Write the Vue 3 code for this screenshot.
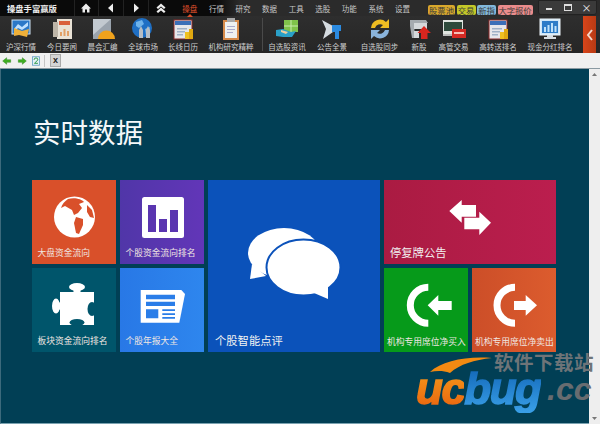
<template>
  <div class="app">
    <div class="titlebar">
      <span class="app-name">操盘手富赢版</span>
      <div class="nav-btns">
        <span class="nav-btn">
          <svg width="12" height="12" viewBox="0 0 12 12"><path d="M6 1.500 11 6.500H9.500V10.500H7V7.500H5V10.500H2.500V6.500H1Z" fill="#eee" /></svg>
        </span>
        <span class="nav-btn">
          <svg width="12" height="12" viewBox="0 0 12 12"><path d="M8 1.500V10.500L3 6Z" fill="#eee" /></svg>
        </span>
        <span class="nav-btn">
          <svg width="12" height="12" viewBox="0 0 12 12"><path d="M4 1.500V10.500L9 6Z" fill="#eee" /></svg>
        </span>
        <span class="nav-btn">
          <svg width="12" height="12" viewBox="0 0 12 12"><path d="M1.500 5.500 6 1.500 10.500 5.500 9 7 6 4.500 3 7ZM1.500 9.500 6 5.500 10.500 9.500 9 11 6 8.500 3 11Z" fill="#eee" /></svg>
        </span>
      </div>
      <div class="menu">
        <span v-for="(m, i) in menus" :key="m" class="menu-item" :class="{ active: i === 0 }">{{ m }}</span>
      </div>
      <div class="badges">
        <span class="badge yellow">股票池</span>
        <span class="badge lime">交易</span>
        <span class="badge blue">新指</span>
        <span class="badge pink">大字报价</span>
      </div>
      <div class="win-btns">
        <span class="win-btn"><i class="win-min"></i></span>
        <span class="win-btn"><i class="win-max"></i></span>
        <span class="win-btn win-close">×</span>
      </div>
    </div>

    <div class="toolbar">
      <template v-for="item in tools" :key="item.label">
        <span v-if="item.sep" class="tool-sep"></span>
        <div class="tool" :style="{ width: item.w + 'px' }">
          <svg width="26" height="24" viewBox="0 0 26 24">
            <g v-if="item.icon === 'market'">
              <rect x="4" y="3" width="18" height="14" fill="#2b78c8" stroke="#cfe3f5" />
              <path d="M6 12 10 7 14 10 20 5V9L14 13 10 11 7 14Z" fill="#bfe0ff" />
              <path d="M6 11 14 14 21 12 19 20 11 18 6 19Z" fill="#eeb03a" />
            </g>
            <g v-else-if="item.icon === 'news'">
              <rect x="8" y="2" width="15" height="20" fill="#e9e2d6" />
              <rect x="4" y="5" width="5" height="15" fill="#bdb5a8" />
              <rect x="10" y="4" width="11" height="4" fill="#d9603c" />
              <path d="M11 19V15H13V19ZM14.500 19V12H16.500V19ZM18 19V14H20V19Z" fill="#e2a066" />
            </g>
            <g v-else-if="item.icon === 'morning'">
              <rect x="3" y="2" width="18" height="20" fill="#9aa3ad" />
              <path d="M3 2H21L3 18Z" fill="#c2c9d0" />
              <path d="M8 22A8.500 8.500 0 0 1 25 22Z" fill="#f0a21c" />
            </g>
            <g v-else-if="item.icon === 'globe'">
              <circle cx="12" cy="11" r="10" fill="#1f6fc4" />
              <path d="M6 5 12 3 14 7 9 11 6 9ZM15 12 20 10 19 16 16 18Z" fill="#6fb3ea" />
              <path d="M9 21V13L11 9 13 13V21ZM16 21V13L18 9 20 13V21Z" fill="#b8bec4" />
            </g>
            <g v-else-if="item.icon === 'calendar'">
              <rect x="4" y="3" width="18" height="19" fill="#e6e6ea" stroke="#8c2b2b" />
              <rect x="5" y="4" width="16" height="4" fill="#3c6fb8" />
              <path d="M7 11H17V12.500H7ZM7 14H15V15.500H7ZM7 17H13V18.500H7Z" fill="#9fb0c6" />
              <rect x="15" y="15" width="4" height="7" fill="#f0c020" />
              <rect x="19" y="12" width="4" height="10" fill="#e0a810" />
            </g>
            <g v-else-if="item.icon === 'clip'">
              <rect x="5" y="3" width="16" height="20" fill="#d68a4a" />
              <rect x="7" y="5" width="12" height="16" fill="#eef0f0" />
              <rect x="9" y="1" width="8" height="4" fill="#a8a8a8" />
              <path d="M9 9H17V10H9ZM9 12H17V13H9ZM9 15H15V16H9Z" fill="#aac" />
            </g>
            <g v-else-if="item.icon === 'hand'">
              <rect x="10" y="3" width="14" height="12" fill="#7fc24a" />
              <path d="M17 3V15M10 9H24" stroke="#c8ecae" />
              <path d="M2 13 9 12 17 15 22 14 18 20 9 20 2 19Z" fill="#2aa0c8" />
              <path d="M7 13 14 15 12 17 7 15Z" fill="#f0d0a0" />
            </g>
            <g v-else-if="item.icon === 'horn'">
              <path d="M3 3 14 9V15L4 22 7 12Z" fill="#d5dbe0" />
              <path d="M13 8H22V14H20V22H16V15H13Z" fill="#2b8ae0" />
            </g>
            <g v-else-if="item.icon === 'sync'">
              <path d="M4 11A9 9 0 0 1 19 5L22 2V11H13L16 8A5.500 5.500 0 0 0 8 11Z" fill="#eebc22" />
              <path d="M22 13A9 9 0 0 1 7 19L4 22V13H13L10 16A5.500 5.500 0 0 0 18 13Z" fill="#8ab4dc" />
            </g>
            <g v-else-if="item.icon === 'new'">
              <path d="M4 3H20L22 6H8L9 21H6L4 9Z" fill="#a6abb0" />
              <path d="M8 6H21V12H8ZM8 14H13V21H8Z" fill="#d5d8db" />
              <path d="M18 9 25 16H21.500V22H15V16H11.500Z" fill="#d8261f" />
            </g>
            <g v-else-if="item.icon === 'exec'">
              <rect x="2" y="3" width="20" height="14" fill="#e0e4e0" />
              <rect x="3" y="5" width="18" height="9" fill="#2e4a3c" />
              <rect x="11" y="12" width="14" height="9" fill="#d42a24" />
              <rect x="13" y="15" width="10" height="2" fill="#f5c0b8" />
              <rect x="2" y="17" width="9" height="2" fill="#bbb" />
            </g>
            <g v-else>
              <rect x="3" y="2" width="20" height="16" fill="#cfe6f7" stroke="#eef6fc" />
              <rect x="5" y="4" width="16" height="12" fill="#2d7cc8" />
              <path d="M7 15V10H9V15ZM10.500 15V8H12.500V15ZM14 15V6H16V15ZM17.500 15V9H19.500V15Z" fill="#bfe2fa" />
              <path d="M10 18H16V20H19V22H7V20H10Z" fill="#d7dde2" />
            </g>
          </svg>
          <span class="tool-label">{{ item.label }}</span>
        </div>
      </template>
      <div class="collapse">
        <svg width="10" height="14" viewBox="0 0 10 14"><path d="M7 2 3 7 7 12" fill="none" stroke="#f3d6c8" stroke-width="2" /></svg>
      </div>
    </div>

    <div class="navrow">
      <svg width="10" height="10" viewBox="0 0 15 13"><path d="M1 6.500 7 1.500V4.500H13V8.500H7V11.500Z" fill="#3fae22" stroke="#1e7a10" stroke-width=".6" /></svg>
      <svg class="nav-second" width="10" height="10" viewBox="0 0 15 13"><path d="M14 6.500 8 1.500V4.500H2V8.500H8V11.500Z" fill="#3fae22" stroke="#1e7a10" stroke-width=".6" /></svg>
      <svg class="nav-doc" width="10" height="12" viewBox="0 0 13 13">
        <rect x="2" y="1" width="9" height="11" fill="#e4f0f8" stroke="#5a9ac0" />
        <path d="M4 5A2.500 2.500 0 0 1 9 5L4.500 9.500H9" fill="none" stroke="#2f9c4a" stroke-width="1.300" />
      </svg>
      <span class="nav-sep"></span>
      <span class="nav-close">x</span>
    </div>

    <div class="main">
      <div class="content">
        <h1 class="heading">实时数据</h1>
        <div class="tiles">
          <div class="tile c-orange">
            <svg width="84" height="62" viewBox="0 0 84 62">
              <circle cx="42.500" cy="37" r="20.500" fill="#fff" />
              <path d="M36 19 C42 17 50 19 52 22 L47 24 L50 28 L46 33 L42 35 L40 30 L33 26 L29 28 C30 24 33 21 36 19Z" fill="#d9502a" />
              <path d="M44 37 L51 39 L51 45 L47 54 L44 53 L42 43Z" fill="#d9502a" />
              <path d="M55 25 L60 30 L62 38 L58 37 L55 32Z" fill="#d9502a" />
            </svg>
            <span class="tile-label">大盘资金流向</span>
          </div>
          <div class="tile c-purple">
            <svg width="84" height="62" viewBox="0 0 84 62">
              <rect x="22" y="17" width="42" height="41" rx="2.500" fill="#fff" />
              <path d="M28 25H36V52H28ZM39 39H47V52H39ZM50 30H58V52H50Z" fill="#5a35b0" />
            </svg>
            <span class="tile-label">个股资金流向排名</span>
          </div>
          <div class="tile tile-big c-blue">
            <svg width="172" height="148" viewBox="0 0 172 148">
              <ellipse cx="76" cy="73" rx="36" ry="25" fill="#fff" />
              <path d="M44 84 42 99 58 96Z" fill="#fff" />
              <ellipse cx="95.500" cy="87.500" rx="37" ry="28" fill="#fff" stroke="#0b52ba" stroke-width="2" />
              <path d="M106 113 120 119 120 106Z" fill="#fff" />
            </svg>
            <span class="tile-label label-large">个股智能点评</span>
          </div>
          <div class="tile tile-wide c-crimson">
            <svg width="172" height="62" viewBox="0 0 172 62">
              <path d="M65.300 31 77.700 20V25H92V36.700H77.700V42.700Z" fill="#fff" />
              <path d="M107 42.700 95.300 31.700V37.700H80.300V49.300H95.300V55Z" fill="#fff" />
            </svg>
            <span class="tile-label label-large label-wide">停复牌公告</span>
          </div>
          <div class="tile c-teal">
            <svg width="84" height="62" viewBox="0 0 84 62">
              <rect x="28" y="24" width="34" height="33" fill="#fff" />
              <ellipse cx="45" cy="19" rx="8" ry="4" fill="#fff" />
              <rect x="41.500" y="19" width="7" height="6" fill="#fff" />
              <ellipse cx="24" cy="38" rx="4" ry="7.500" fill="#fff" />
              <rect x="24" y="34.500" width="5" height="7" fill="#fff" />
              <ellipse cx="60" cy="41" rx="4.500" ry="7" fill="#00556b" />
              <ellipse cx="45" cy="54.500" rx="7.500" ry="3.500" fill="#00556b" />
            </svg>
            <span class="tile-label">板块资金流向排名</span>
          </div>
          <div class="tile c-sky">
            <svg width="84" height="62" viewBox="0 0 84 62">
              <path d="M20.700 22H61.300L65 26 59.300 54.700H20.700Z" fill="#fff" />
              <path d="M26 26.700H55V31.300H26ZM26 33.700H55V38H26ZM26 41.300H38.300V50.300H26ZM42.300 41.300H55V43H42.300ZM42.300 45.300H55V47H42.300ZM42.300 49H55V50.700H42.300Z" fill="#2a7de8" />
            </svg>
            <span class="tile-label">个股年报大全</span>
          </div>
          <div class="tile c-green">
            <svg width="84" height="62" viewBox="0 0 84 62">
              <path d="M44.300 19.300A18 18 0 0 0 44.300 55.300" fill="none" stroke="#fff" stroke-width="7" />
              <path d="M43.700 37.300 54.300 27V33H67.700V42H54.300V47.700Z" fill="#fff" />
            </svg>
            <span class="tile-label label-tight">机构专用席位净买入</span>
          </div>
          <div class="tile c-rust">
            <svg width="84" height="62" viewBox="0 0 84 62">
              <path d="M43 19.300A18 18 0 0 0 43 55.300" fill="none" stroke="#fff" stroke-width="7" />
              <path d="M65 37.300 53.700 27V33H42V42H53.700V47.700Z" fill="#fff" />
            </svg>
            <span class="tile-label label-tight">机构专用席位净卖出</span>
          </div>
        </div>
      </div>
      <div class="scrollbar">
        <svg width="7" height="5" viewBox="0 0 7 5"><path d="M3.500 1 6 4H1Z" fill="#777" /></svg>
        <svg width="7" height="5" viewBox="0 0 7 5"><path d="M3.500 4 6 1H1Z" fill="#777" /></svg>
      </div>
    </div>

    <!-- 워터마크 -->
    <div class="watermark">
      <svg class="wm-arc" width="64" height="18" viewBox="0 0 64 18">
        <path d="M0 16C12 5 36 0 62 2 44 4 30 8 20 17 12 14 6 15 0 16Z" fill="#f28a12" />
      </svg>
      <span class="wm-site">软件下载站</span>
      <div class="wm-logo">
        <span class="wm-uc">uc</span><span class="wm-bug">bug</span>
      </div>
      <span class="wm-cc">.cc</span>
    </div>
  </div>
</template>

<script setup>
const menus = ['操盘', '行情', '研究', '数据', '工具', '选股', '功能', '系统', '设置']

const tools = [
  { label: '沪深行情', w: 42, icon: 'market' },
  { label: '今日要闻', w: 40, icon: 'news' },
  { label: '晨会汇编', w: 41, icon: 'morning' },
  { label: '全球市场', w: 40, icon: 'globe' },
  { label: '长线日历', w: 40, icon: 'calendar' },
  { label: '机构研究精粹', w: 56, icon: 'clip' },
  { label: '自选股资讯', w: 44, icon: 'hand', sep: true },
  { label: '公告全景', w: 46, icon: 'horn' },
  { label: '自选股同步', w: 49, icon: 'sync' },
  { label: '新股', w: 30, icon: 'new' },
  { label: '高管交易', w: 39, icon: 'exec' },
  { label: '高转送排名', w: 50, icon: 'calendar' },
  { label: '现金分红排名', w: 54, icon: 'monitor' },
]
</script>

<style>
html,
body {
  margin: 0;
  background: #013f55;
}
</style>

<style scoped>
.app {
  position: relative;
  width: 600px;
  height: 424px;
  overflow: hidden;
  display: flex;
  flex-direction: column;
  font-family: 'Noto Sans CJK SC', 'Liberation Sans', sans-serif;
}

.titlebar {
  height: 16px;
  display: flex;
  align-items: center;
  background: linear-gradient(90deg, #0a0a0a 0, #0a0a0a 36%, #2b2b2b 40%, #2b2b2b 100%);
  color: #ddd;
}
.app-name {
  width: 73.500px;
  padding-left: 7px;
  box-sizing: border-box;
  font-size: 8.300px;
  font-weight: 700;
  color: #eee;
}
.nav-btns {
  display: flex;
  width: 99.500px;
}
.nav-btn {
  width: 25px;
  height: 16px;
  display: flex;
  align-items: center;
  justify-content: center;
  border-left: 1px solid #222;
  box-sizing: border-box;
}
.menu {
  display: flex;
  width: 249px;
  margin-left: 3.500px;
}
.menu-item {
  position: relative;
  width: 26.600px;
  text-align: center;
  font-size: 7.500px;
  color: #c8c8c8;
}
.menu-item.active {
  color: #e0502a;
}
.menu-item.active::after {
  content: '';
  position: absolute;
  left: 10px;
  bottom: -3px;
  border: 3px solid transparent;
  border-bottom-color: #e0502a;
  border-top: 0;
}
.badges {
  display: flex;
  gap: 1.500px;
  margin-left: 2.500px;
  margin-top: 3px;
}
.badge {
  box-sizing: border-box;
  height: 10px;
  line-height: 10px;
  border-radius: 2px;
  font-size: 8.300px;
  text-align: center;
  white-space: nowrap;
  color: #3a3a3a;
}
.yellow {
  width: 27px;
  background: #d9a82c;
}
.lime {
  width: 19px;
  background: #c4c828;
}
.blue {
  width: 19px;
  background: #82b8dc;
}
.pink {
  width: 35px;
  background: #ea8c8c;
}
.win-btns {
  display: flex;
  margin-left: auto;
  margin-right: 3px;
  height: 13px;
  align-self: flex-start;
  background: #3a3a3a;
  border: 1px solid #222;
  border-radius: 0 0 3px 3px;
}
.win-btn {
  width: 19px;
  display: flex;
  align-items: center;
  justify-content: center;
  color: #eee;
}
.win-min {
  width: 6px;
  height: 2px;
  background: #ddd;
  margin-top: 3px;
}
.win-max {
  width: 6px;
  height: 4px;
  border: 1px solid #ddd;
  border-top-width: 2px;
}
.win-close {
  font-size: 10px;
  line-height: 10px;
}

.toolbar {
  height: 37px;
  display: flex;
  align-items: stretch;
  background: linear-gradient(#2e2e2e, #262626);
}
.tool {
  display: flex;
  flex-direction: column;
  align-items: center;
  padding-top: 1px;
  box-sizing: border-box;
}
.tool-label {
  font-size: 7.500px;
  line-height: 12px;
  color: #cfcfcf;
  white-space: nowrap;
}
.tool-sep {
  width: 6px;
  background: linear-gradient(#4a4a4a, #4a4a4a) 3px 2px / 1px 33px no-repeat;
}
.collapse {
  width: 13px;
  margin-left: 6px;
  display: flex;
  align-items: center;
  justify-content: center;
  background: linear-gradient(90deg, #d8451a, #b83a14);
}

.navrow {
  height: 15px;
  display: flex;
  align-items: center;
  padding-left: 2px;
  background: #f0f0f0;
  border-bottom: 1px solid #8b9aa2;
}
.nav-second {
  margin-left: 5px;
}
.nav-doc {
  margin-left: 4px;
}
.nav-sep {
  width: 1px;
  height: 12px;
  margin: 0 5px 0 3px;
  background: #c4c4c4;
}
.nav-close {
  width: 9px;
  height: 11px;
  line-height: 10px;
  text-align: center;
  font-family: 'Liberation Sans', sans-serif;
  font-size: 9px;
  font-weight: 700;
  color: #222;
  background: #d4d4d4;
  border: 1px solid #aaa;
}

.main {
  flex: 1;
  min-height: 0;
  display: flex;
}
.content {
  flex: 1;
  background: #013f55;
  border-left: 1px solid #3c6a7c;
  border-bottom: 1px solid #7aa2b0;
  padding-left: 31px;
  box-sizing: border-box;
}
.heading {
  margin: 42px 0 0 1px;
  height: 40px;
  line-height: 40px;
  font-size: 27.500px;
  font-weight: 400;
  color: #f4f8fa;
}
.tiles {
  margin-top: 29px;
  display: grid;
  grid-template-columns: 84px 84px 172px 84px 84px;
  grid-template-rows: 84px 84px;
  gap: 4px;
}
.tile {
  display: flex;
  flex-direction: column;
  overflow: hidden;
}
.tile svg {
  display: block;
  flex: none;
}
.tile-big {
  grid-column: 3;
  grid-row: 1 / 3;
}
.tile-wide {
  grid-column: 4 / 6;
  grid-row: 1;
}
.tile-label {
  margin-top: auto;
  padding-left: 5.500px;
  padding-bottom: 3px;
  font-size: 8.750px;
  line-height: 16px;
  color: #f0e6e2;
  white-space: nowrap;
}
.label-large {
  padding-left: 7px;
  padding-bottom: 2px;
  font-size: 11.300px;
  line-height: 20px;
  color: #f2f2f2;
}
.label-wide {
  padding-left: 6px;
}
.label-tight {
  padding-left: 3px;
  padding-bottom: 2px;
}
.c-orange {
  background: #d9502a;
}
.c-purple {
  background: linear-gradient(90deg, #5036a8, #6236b8);
}
.c-blue {
  background: #0b52ba;
}
.c-crimson {
  background: linear-gradient(90deg, #aa1b42, #bb1e4e);
}
.c-teal {
  background: #00556b;
}
.c-sky {
  background: linear-gradient(90deg, #2878e6, #2e86ee);
}
.c-green {
  background: #069a1a;
}
.c-rust {
  background: linear-gradient(90deg, #cc4e28, #dc5c2e);
}

.scrollbar {
  width: 11px;
  display: flex;
  flex-direction: column;
  align-items: center;
  justify-content: space-between;
  padding: 3px 0 3px;
  box-sizing: border-box;
  background: #eeeeee;
}

.watermark {
  position: absolute;
  left: 416px;
  top: 355px;
  width: 180px;
  height: 56px;
}
.wm-arc {
  position: absolute;
  left: 14px;
  top: 1px;
}
.wm-site {
  position: absolute;
  left: 78px;
  top: -3px;
  height: 20px;
  font-size: 19.500px;
  line-height: 20px;
  font-weight: 700;
  letter-spacing: 0.500px;
  white-space: nowrap;
  color: #6e7478;
}
.wm-logo {
  position: absolute;
  left: 0;
  top: 18px;
  height: 32px;
  font-family: 'Liberation Sans', sans-serif;
  font-weight: 700;
  font-style: italic;
  font-size: 44px;
  line-height: 32px;
  letter-spacing: -1.500px;
  white-space: nowrap;
  -webkit-text-stroke: 1.500px transparent;
}
.wm-uc {
  background: linear-gradient(#f7a01c, #e8600e);
  -webkit-background-clip: text;
  background-clip: text;
  color: transparent;
}
.wm-bug {
  background: linear-gradient(#0f63b4, #3aa0e8);
  -webkit-background-clip: text;
  background-clip: text;
  color: transparent;
}
.wm-cc {
  position: absolute;
  left: 131px;
  top: 22px;
  font-family: 'Liberation Sans', sans-serif;
  font-weight: 700;
  font-style: italic;
  font-size: 32px;
  line-height: 24px;
  white-space: nowrap;
  color: #686c70;
}
</style>
